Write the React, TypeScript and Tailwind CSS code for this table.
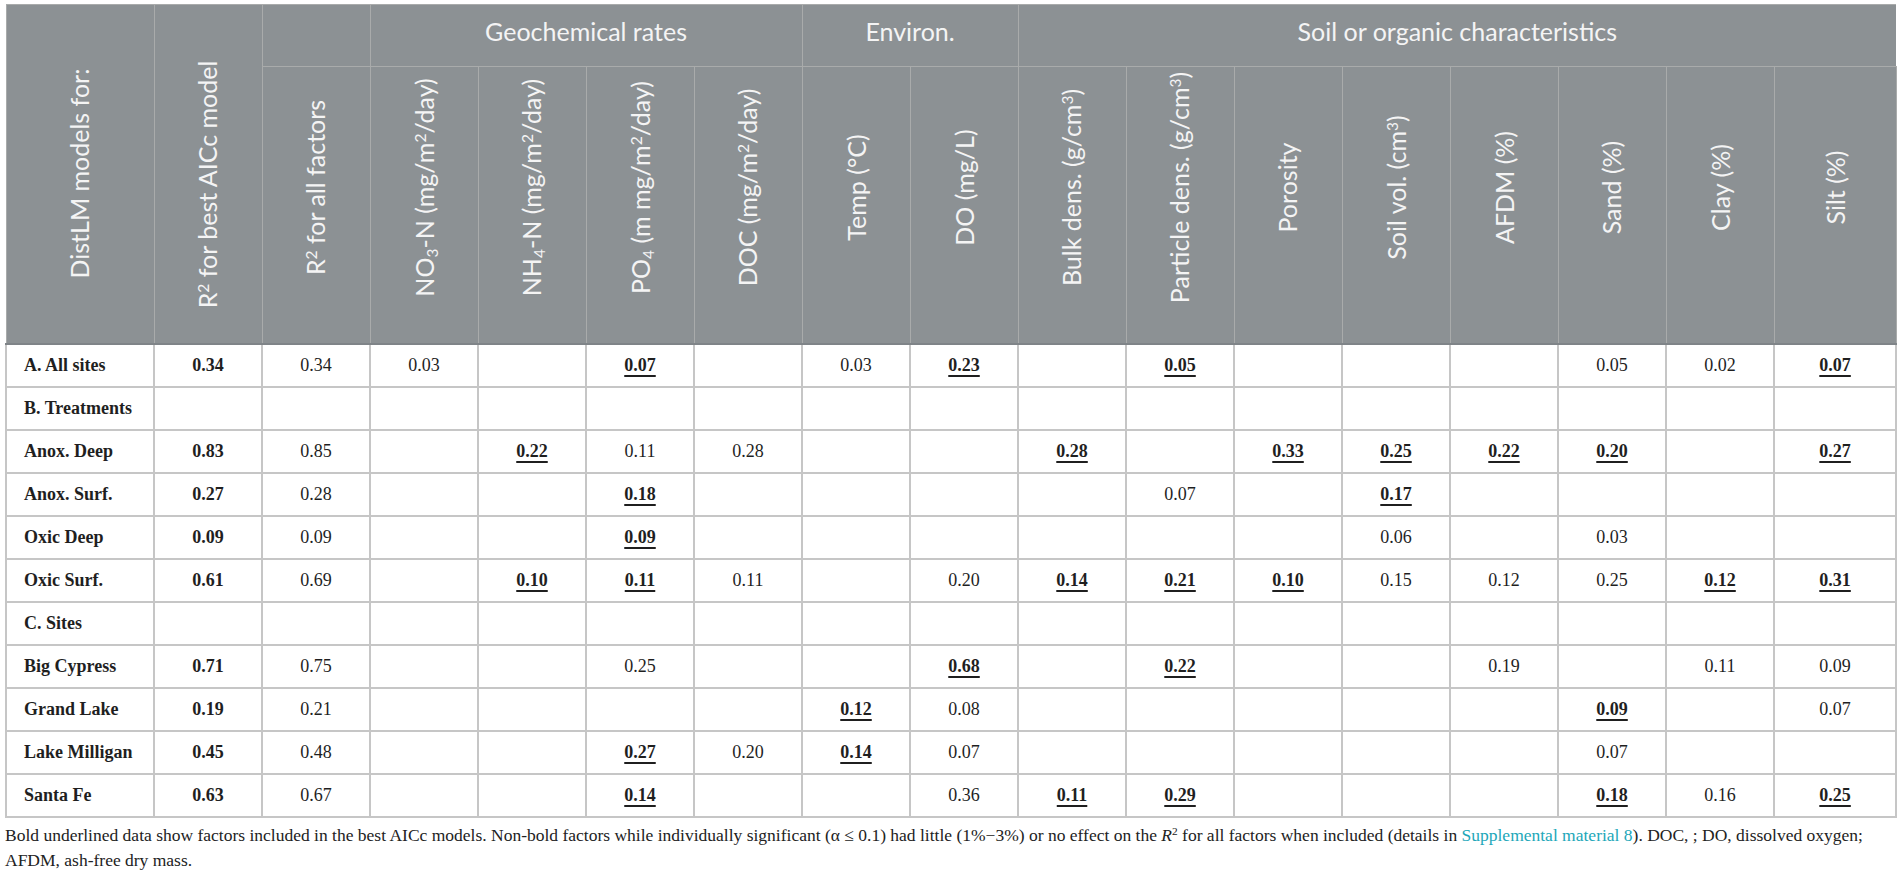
import type { ReactNode } from "react";

// ================= TYPES =================
type Cell = null | { v: string; bu?: boolean };

interface Row {
  label: string;
  best?: string;
  values?: Cell[];
}

interface SubHead {
  key: string;
  node: ReactNode;
}

// ================= DATA =================
const n = (v: string): Cell => ({ v });
const b = (v: string): Cell => ({ v, bu: true });
const _ = null;

const rows: Row[] = [
  {
    label: "A. All sites",
    best: "0.34",
    values: [n("0.34"), n("0.03"), _, b("0.07"), _, n("0.03"), b("0.23"), _, b("0.05"), _, _, _, n("0.05"), n("0.02"), b("0.07")],
  },
  { label: "B. Treatments" },
  {
    label: "Anox. Deep",
    best: "0.83",
    values: [n("0.85"), _, b("0.22"), n("0.11"), n("0.28"), _, _, b("0.28"), _, b("0.33"), b("0.25"), b("0.22"), b("0.20"), _, b("0.27")],
  },
  {
    label: "Anox. Surf.",
    best: "0.27",
    values: [n("0.28"), _, _, b("0.18"), _, _, _, _, n("0.07"), _, b("0.17"), _, _, _, _],
  },
  {
    label: "Oxic Deep",
    best: "0.09",
    values: [n("0.09"), _, _, b("0.09"), _, _, _, _, _, _, n("0.06"), _, n("0.03"), _, _],
  },
  {
    label: "Oxic Surf.",
    best: "0.61",
    values: [n("0.69"), _, b("0.10"), b("0.11"), n("0.11"), _, n("0.20"), b("0.14"), b("0.21"), b("0.10"), n("0.15"), n("0.12"), n("0.25"), b("0.12"), b("0.31")],
  },
  { label: "C. Sites" },
  {
    label: "Big Cypress",
    best: "0.71",
    values: [n("0.75"), _, _, n("0.25"), _, _, b("0.68"), _, b("0.22"), _, _, n("0.19"), _, n("0.11"), n("0.09")],
  },
  {
    label: "Grand Lake",
    best: "0.19",
    values: [n("0.21"), _, _, _, _, b("0.12"), n("0.08"), _, _, _, _, _, b("0.09"), _, n("0.07")],
  },
  {
    label: "Lake Milligan",
    best: "0.45",
    values: [n("0.48"), _, _, b("0.27"), n("0.20"), b("0.14"), n("0.07"), _, _, _, _, _, n("0.07"), _, _],
  },
  {
    label: "Santa Fe",
    best: "0.63",
    values: [n("0.67"), _, _, b("0.14"), _, _, n("0.36"), b("0.11"), b("0.29"), _, _, _, b("0.18"), n("0.16"), b("0.25")],
  },
];

const Sup = ({ children }: { children: ReactNode }) => (
  <sup className="text-[0.62em] leading-none">{children}</sup>
);
const Sub = ({ children }: { children: ReactNode }) => (
  <sub className="text-[0.62em] leading-none">{children}</sub>
);

const subHeads: SubHead[] = [
  { key: "no3", node: <>NO<Sub>3</Sub>-N (mg/m<Sup>2</Sup>/day)</> },
  { key: "nh4", node: <>NH<Sub>4</Sub>-N (mg/m<Sup>2</Sup>/day)</> },
  { key: "po4", node: <>PO<Sub>4</Sub> (m mg/m<Sup>2</Sup>/day)</> },
  { key: "doc", node: <>DOC (mg/m<Sup>2</Sup>/day)</> },
  { key: "temp", node: <>Temp (°C)</> },
  { key: "do", node: <>DO (mg/L)</> },
  { key: "bulk", node: <>Bulk dens. (g/cm<Sup>3</Sup>)</> },
  { key: "part", node: <>Particle dens. (g/cm<Sup>3</Sup>)</> },
  { key: "poro", node: <>Porosity</> },
  { key: "soil", node: <>Soil vol. (cm<Sup>3</Sup>)</> },
  { key: "afdm", node: <>AFDM (%)</> },
  { key: "sand", node: <>Sand (%)</> },
  { key: "clay", node: <>Clay (%)</> },
  { key: "silt", node: <>Silt (%)</> },
];

// ================= HEADER BITS =================
// rotated label, reads bottom to top
function Vertical({ children, className = "" }: { children: ReactNode; className?: string }) {
  return (
    <div className={`flex h-full items-center justify-center ${className}`}>
      <span className="-rotate-90 whitespace-nowrap leading-none">{children}</span>
    </div>
  );
}

const th = "bg-[#8c9194] border border-[#a9abab] p-0 font-normal align-middle";
const td = "border-2 border-[#c6c6c6] p-0 text-center align-middle";

// ================= MAIN =================
export default function App() {
  return (
    <div className="min-h-screen overflow-hidden bg-white pt-[4px] pl-[5px] font-['Liberation_Serif',serif] text-[#1f1f1f]">
      <table className="table-fixed border-collapse w-[1890px]">
        <colgroup>
          <col className="w-[148px]" />
          {Array.from({ length: 15 }).map((_, i) => (
            <col key={i} className="w-[108px]" />
          ))}
          <col className="w-[122px]" />
        </colgroup>

        <thead className="font-['Lato',sans-serif] text-[25px] text-[#f4f4f4]">
          <tr className="h-[62px]">
            <th rowSpan={2} className={`${th} border-b-2 border-b-[#7f8488]`}>
              <Vertical>DistLM models for:</Vertical>
            </th>
            <th rowSpan={2} className={`${th} border-b-2 border-b-[#7f8488]`}>
              <Vertical className="pt-[22px]">
                R<Sup>2</Sup> for best AICc model
              </Vertical>
            </th>
            <th className={th}></th>
            <th colSpan={4} className={`${th} border-x-0 pb-[8px]`}>
              Geochemical rates
            </th>
            <th colSpan={2} className={`${th} pb-[8px]`}>
              Environ.
            </th>
            <th colSpan={8} className={`${th} border-r-0 pb-[8px]`}>
              Soil or organic characteristics
            </th>
          </tr>
          <tr className="h-[277px]">
            <th className={`${th} border-b-2 border-b-[#7f8488]`}>
              <Vertical className="pb-[34px]">
                R<Sup>2</Sup> for all factors
              </Vertical>
            </th>
            {subHeads.map((h) => (
              <th key={h.key} className={`${th} border-b-2 border-b-[#7f8488]`}>
                <Vertical className="pb-[34px]">{h.node}</Vertical>
              </th>
            ))}
          </tr>
        </thead>

        <tbody className="text-[18px]">
          {rows.map((r) => (
            <tr key={r.label} className="h-[43px]">
              <td className={`${td} text-left pl-[17px] font-bold whitespace-nowrap`}>{r.label}</td>
              <td className={`${td} font-bold`}>{r.best ?? ""}</td>
              {Array.from({ length: 15 }).map((_, i) => {
                const c = r.values?.[i] ?? null;
                return (
                  <td key={i} className={td}>
                    {c &&
                      (c.bu ? (
                        <span className="font-bold underline decoration-[1.5px] underline-offset-[4px]">
                          {c.v}
                        </span>
                      ) : (
                        c.v
                      ))}
                  </td>
                );
              })}
            </tr>
          ))}
        </tbody>
      </table>

      {/* FOOTNOTE */}
      <p className="mt-[5px] pr-[2px] text-[17.5px] leading-[25px] text-[#222]">
        Bold underlined data show factors included in the best AICc models. Non-bold factors while
        individually significant (α ≤ 0.1) had little (1%−3%) or no effect on the <i>R</i>
        <sup className="text-[0.65em]">2</sup> for all factors when included (details in{" "}
        <span className="text-[#22a7b9]">Supplemental material 8</span>). DOC, ; DO, dissolved oxygen;
        <br />
        AFDM, ash-free dry mass.
      </p>
    </div>
  );
}
